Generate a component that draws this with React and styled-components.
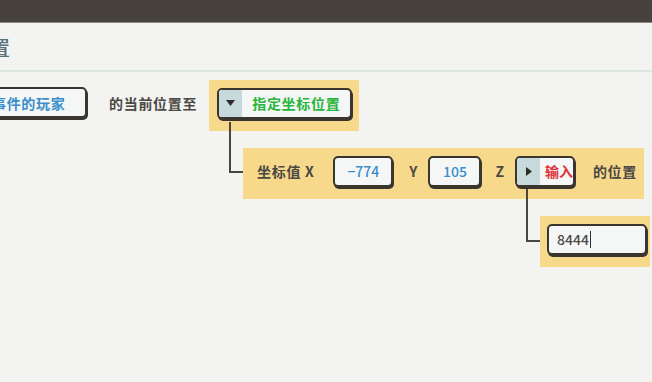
import React from 'react';
import styled, { createGlobalStyle } from 'styled-components';

const GlobalStyle = createGlobalStyle`
  body {
    margin: 0;
    background: #f3f3f1;
    font-family: "Noto Sans CJK SC", "Noto Sans", sans-serif;
    overflow: hidden;
  }
`;

const Page = styled.div`
  width: 652px;
  height: 382px;
  overflow: hidden;
  background: #f3f3f1;
`;

const TopBar = styled.div`
  height: 22px;
  background: #48423c;
  border-bottom: 1px solid #8b8782;
`;

const Header = styled.div`
  height: 49px;
  display: flex;
  align-items: center;
  padding-top: 2px;
  box-sizing: border-box;
  border-bottom: 2px solid #dde5e1;
  overflow: hidden;
`;

const Title = styled.h1`
  margin: 0 0 0 -70px;
  font-size: 20px;
  font-weight: 500;
  color: #567079;
  white-space: nowrap;
`;

const Editor = styled.div`
  display: flex;
  flex-direction: column;
  margin-left: -59px;
  padding-top: 8px;
`;

const Row = styled.div`
  display: flex;
  align-items: center;
`;

const Slot = styled.div`
  display: flex;
  align-items: center;
  justify-content: ${(p) => (p.$align === 'left' ? 'flex-start' : 'center')};
  box-sizing: border-box;
  width: ${(p) => p.$width}px;
  height: 31px;
  padding: 0 8px;
  margin-left: ${(p) => p.$gap || 0}px;
  border: 2px solid #3b352f;
  border-radius: 5px;
  background: #f5f7f7;
  box-shadow: 1px 2px 0 #3b352f;
  color: ${(p) => p.$color || '#3a8ec9'};
  font-size: 14px;
  font-weight: ${(p) => p.$weight || 700};
  letter-spacing: ${(p) => (p.$spaced ? '0.7px' : '0')};
  white-space: nowrap;
  margin-bottom: ${(p) => p.$lift || 0}px;
`;

const Text = styled.span`
  color: #4b4843;
  font-size: 14px;
  font-weight: 700;
  letter-spacing: ${(p) => (p.$spaced ? '0.7px' : '0')};
  white-space: nowrap;
  margin: ${(p) => p.$margin || '0'};
`;

const Block = styled.div`
  display: flex;
  align-items: center;
  box-sizing: border-box;
  height: 51px;
  padding: ${(p) => p.$pad || '0 7px 5px 8px'};
  background: #f6d98b;
  width: ${(p) => (p.$width ? `${p.$width}px` : 'auto')};
`;

const Select = styled.div`
  display: flex;
  box-sizing: border-box;
  height: 31px;
  width: ${(p) => p.$width}px;
  border: 2px solid #3b352f;
  border-radius: 5px;
  background: #f5f7f7;
  box-shadow: 1px 2px 0 #3b352f;
  overflow: hidden;
`;

const Toggle = styled.div`
  display: flex;
  align-items: center;
  justify-content: center;
  width: 23px;
  flex: none;
  background: #c6dadb;
`;

const SelectText = styled.span`
  display: flex;
  align-items: center;
  padding-left: ${(p) => p.$pad}px;
  color: ${(p) => p.$color};
  font-size: 14px;
  font-weight: 700;
  letter-spacing: ${(p) => p.$spacing ?? 0.7}px;
  white-space: nowrap;
`;

const Branch = styled.div`
  position: relative;
  display: flex;
  align-self: flex-start;
  margin-left: ${(p) => p.$left}px;
  margin-top: 17px;
`;

const Stem = styled.span`
  position: absolute;
  left: -14px;
  top: ${(p) => p.$top}px;
  width: 14px;
  height: ${(p) => p.$height}px;
  box-sizing: border-box;
  border-left: 2px solid #4a4540;
  border-bottom: 2px solid #4a4540;
`;

const Caret = styled.span`
  display: inline-block;
  width: 1.5px;
  height: 17px;
  margin-left: 1px;
  background: #333;
`;

const Down = () => (
  <svg width="9" height="6" viewBox="0 0 9 6">
    <path d="M0 0h9L4.5 6z" fill="#2f2b28" />
  </svg>
);

const Right = () => (
  <svg width="6" height="9" viewBox="0 0 6 9">
    <path d="M0 0v9l6-4.5z" fill="#2f2b28" />
  </svg>
);

export default function App() {
  return (
    <Page>
      <GlobalStyle />
      <TopBar />
      <Header>
        <Title>设置位置</Title>
      </Header>
      <Editor>
        <Row>
          <Slot $width={146} $spaced $lift={6}>触发事件的玩家</Slot>
          <Text $spaced $margin="0 12px 6px 22px">的当前位置至</Text>
          <Block>
            <Select $width={135}>
              <Toggle><Down /></Toggle>
              <SelectText $pad={10} $color="#27b53a">指定坐标位置</SelectText>
            </Select>
          </Block>
        </Row>

        <Branch $left={302}>
          <Stem $top={-26} $height={51} />
          <Block $pad="0 7px 5px 14px" $width={401}>
            <Text $spaced>坐标值 X</Text>
            <Slot $width={62} $weight={500} $gap={19}>−774</Slot>
            <Text $margin="0 11px 0 16px">Y</Text>
            <Slot $width={55} $weight={500}>105</Slot>
            <Text $margin="0 11px 0 14px">Z</Text>
            <Select $width={63}>
              <Toggle><Right /></Toggle>
              <SelectText $pad={5} $spacing={0} $color="#e0323a">输入</SelectText>
            </Select>
            <Text $spaced $margin="0 0 0 18px">的位置</Text>
          </Block>
        </Branch>

        <Branch $left={599}>
          <Stem $top={-27} $height={53} />
          <Block $pad="0 3px 5px 7px" $width={110}>
            <Slot $width={100} $align="left" $color="#4d4a47" $weight={500}>
              8444<Caret />
            </Slot>
          </Block>
        </Branch>
      </Editor>
    </Page>
  );
}
